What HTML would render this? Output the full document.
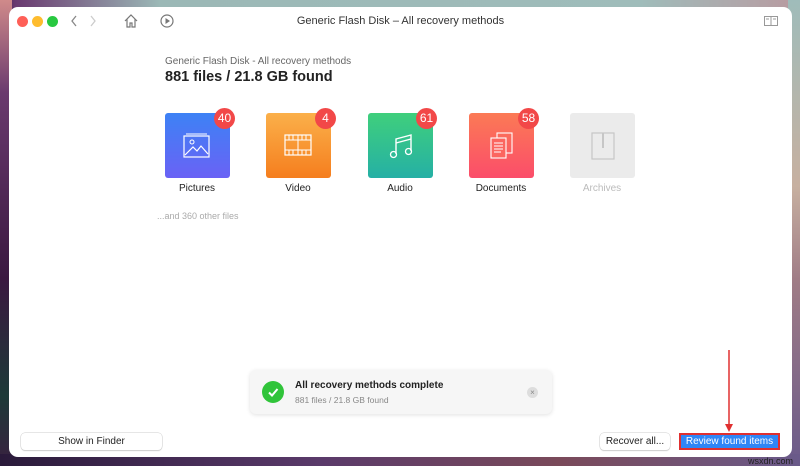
<!DOCTYPE html>
<html><head><meta charset="utf-8"><style>
*{margin:0;padding:0;box-sizing:border-box}
body{width:800px;height:466px;overflow:hidden;position:relative;font-family:"Liberation Sans",sans-serif;
background:linear-gradient(90deg,#4a2050 0%,#6a3a70 2%,#9bb8b6 20%,#9fbcba 80%,#b99aa0 100%);}
.bgl{position:absolute;left:0;top:0;width:12px;height:466px;background:linear-gradient(180deg,#d08a8a 0%,#6a3a6e 20%,#3a1840 60%,#1d3a38 85%,#3a2040 100%)}
.bgr{position:absolute;right:0;top:0;width:12px;height:466px;background:linear-gradient(180deg,#9fbcba 0%,#c7b0a0 40%,#a07c86 60%,#6a5a8a 100%)}
.bgb{position:absolute;left:0;bottom:0;width:800px;height:12px;background:linear-gradient(90deg,#2a1a3a,#5a3a6a 40%,#7a4a5a 70%,#6a5a8a)}
.win{position:absolute;left:9px;top:7px;width:783px;height:450px;background:#fff;border-radius:9px;overflow:hidden}
.abs{position:absolute}
.dot{position:absolute;top:9px;width:11px;height:11px;border-radius:50%}
.tile{position:absolute;top:106px;width:65px;height:65px;border-radius:3px}
.badge{position:absolute;width:21px;height:21px;border-radius:50%;background:#f24848;color:#fff;font-size:12px;text-align:center;line-height:21px;top:101px}
.lbl{position:absolute;top:176px;width:100px;text-align:center;font-size:10px;color:#222}
.btn{position:absolute;top:426px;height:17px;border-radius:4px;background:#fff;box-shadow:0 0 0 0.5px #ccc,0 1px 1px #ccc;font-size:10px;text-align:center;line-height:17px;color:#222}
</style></head><body>
<div class="bgl"></div><div class="bgr"></div><div class="bgb"></div>
<div class="win">
<div class="dot" style="left:8px;background:#fe5f57"></div>
<div class="dot" style="left:23px;background:#febc2e"></div>
<div class="dot" style="left:38px;background:#28c840"></div>
<svg class="abs" style="left:60px;top:7px" width="40" height="14"><path d="M7 2 L3 7 L7 12" stroke="#888" fill="none" stroke-width="1.3"/><path d="M22 2 L26 7 L22 12" stroke="#ccc" fill="none" stroke-width="1.3"/></svg>
<svg class="abs" style="left:114px;top:6px" width="16" height="16"><path d="M2 8 L8 2 L14 8 M4 6 V14 H7 V10 H9 V14 H12 V6" stroke="#777" fill="none" stroke-width="1.2"/></svg>
<svg class="abs" style="left:150px;top:6px" width="16" height="16"><circle cx="8" cy="8" r="6" stroke="#777" fill="none" stroke-width="1.2"/><path d="M6.5 5 L11 8 L6.5 11Z" fill="#777"/></svg>
<div class="abs" style="left:0;width:783px;top:8px;text-align:center;font-size:11px;color:#333">Generic Flash Disk – All recovery methods</div>
<svg class="abs" style="left:755px;top:9px" width="14" height="10"><rect x="0.5" y="0.5" width="13" height="9" stroke="#999" fill="none"/><path d="M7 0V10 M2 3H5 M9 3H12" stroke="#999"/></svg>
<div class="abs" style="left:156px;top:49px;font-size:10px;color:#666">Generic Flash Disk - All recovery methods</div>
<div class="abs" style="left:156px;top:62px;font-size:14.5px;font-weight:bold;color:#222">881 files / 21.8 GB found</div>

<div class="tile" style="left:156px;background:linear-gradient(180deg,#3d82f5,#6a62f5)"></div>
<svg class="abs" style="left:174px;top:125px" width="28" height="26"><rect x="1" y="4" width="25" height="21" stroke="#fff" fill="none" stroke-width="1.2"/><path d="M3 2H24" stroke="#fff"/><circle cx="9" cy="10" r="2" stroke="#fff" fill="none"/><path d="M2 23 L10 15 L14 19 L18 14 L25 22" stroke="#fff" fill="none" stroke-width="1.2"/></svg>
<div class="tile" style="left:257px;background:linear-gradient(180deg,#fbb04a,#f57e1e)"></div>
<svg class="abs" style="left:275px;top:127px" width="28" height="22"><rect x="1" y="1" width="26" height="20" stroke="#fff" fill="none" stroke-width="1.2"/><path d="M1 6H27M1 16H27M14 1V21M5 1V6M9 1V6M18 1V6M22 1V6M5 16V21M9 16V21M18 16V21M22 16V21" stroke="#fff"/></svg>
<div class="tile" style="left:359px;background:linear-gradient(180deg,#3fcf7c,#25b0a5)"></div>
<svg class="abs" style="left:380px;top:125px" width="26" height="28"><path d="M7 22V7L22 3V19" stroke="#fff" fill="none" stroke-width="1.4"/><path d="M7 11L22 7" stroke="#fff" stroke-width="1.4"/><circle cx="4.5" cy="22.5" r="3" stroke="#fff" fill="none" stroke-width="1.3"/><circle cx="19.5" cy="19.5" r="3" stroke="#fff" fill="none" stroke-width="1.3"/></svg>
<div class="tile" style="left:460px;background:linear-gradient(180deg,#fb7a55,#fb4d6a)"></div>
<svg class="abs" style="left:480px;top:125px" width="26" height="28"><rect x="8" y="1" width="15" height="20" stroke="#fff" fill="none" stroke-width="1.1"/><rect x="2" y="6" width="15" height="20" stroke="#fff" fill="#fb6660" stroke-width="1.1"/><path d="M5 11H14M5 14H14M5 17H14M5 20H12" stroke="#fff"/></svg>
<div class="tile" style="left:561px;background:#ebebeb"></div>
<svg class="abs" style="left:582px;top:125px" width="24" height="28"><rect x="1" y="1" width="22" height="26" stroke="#c6c6c6" fill="none" stroke-width="1.2"/><path d="M12 1V16" stroke="#c6c6c6" stroke-width="2"/></svg>

<div class="badge" style="left:205px">40</div>
<div class="badge" style="left:306px">4</div>
<div class="badge" style="left:407px">61</div>
<div class="badge" style="left:509px">58</div>
<div class="lbl" style="left:138px">Pictures</div>
<div class="lbl" style="left:239px">Video</div>
<div class="lbl" style="left:341px">Audio</div>
<div class="lbl" style="left:442px">Documents</div>
<div class="lbl" style="left:543px;color:#bbb">Archives</div>
<div class="abs" style="left:148px;top:204px;font-size:9px;color:#aaa">...and 360 other files</div>

<div class="abs" style="left:241px;top:363px;width:302px;height:44px;background:#f6f6f6;border-radius:6px;box-shadow:0 1px 4px rgba(0,0,0,.12)"></div>
<div class="abs" style="left:253px;top:374px;width:22px;height:22px;border-radius:50%;background:#30c43a"></div>
<svg class="abs" style="left:253px;top:374px" width="22" height="22"><path d="M7 11.5 L10 14.5 L15.5 8" stroke="#fff" fill="none" stroke-width="2"/></svg>
<div class="abs" style="left:286px;top:373px;font-size:10px;font-weight:bold;color:#222">All recovery methods complete</div>
<div class="abs" style="left:286px;top:388px;font-size:8.5px;color:#888">881 files / 21.8 GB found</div>
<div class="abs" style="left:518px;top:380px;width:11px;height:11px;border-radius:50%;background:#ddd;font-size:8px;color:#888;text-align:center;line-height:11px">×</div>

<div class="btn" style="left:12px;width:141px">Show in Finder</div>
<div class="btn" style="left:591px;width:70px">Recover all...</div>
<div class="abs" style="left:670px;top:426px;width:101px;height:17px;background:#2f86f6;border:2px solid #e03030;color:#fff;font-size:10px;text-align:center;line-height:13px">Review found items</div>
<svg class="abs" style="left:714px;top:343px" width="12" height="84"><path d="M6 0V78" stroke="#e03030" stroke-width="1.5"/><path d="M2 74L6 82L10 74Z" fill="#e03030"/></svg>
</div>
<div class="abs" style="left:748px;top:456px;font-size:9px;color:#222">wsxdn.com</div>
</body></html>
